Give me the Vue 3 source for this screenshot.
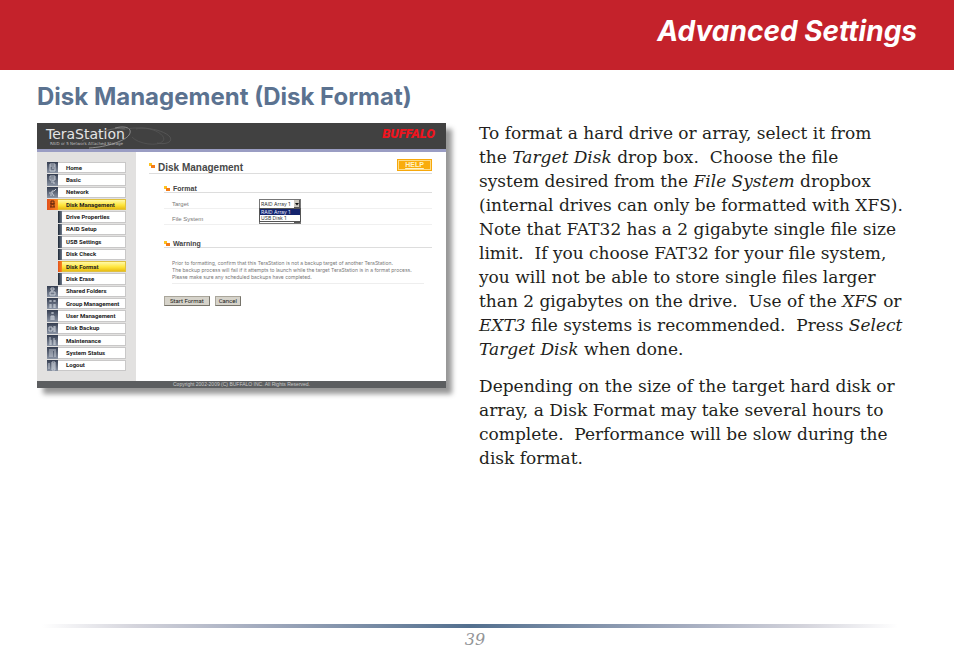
<script setup>
import { ref } from 'vue'

const menu = [
  { label: 'Home', icon: 'M3 2h5v7H3zM3 4h5M5 6h2' },
  { label: 'Basic', icon: 'M3 2h5v4H3zM4 4h4M6 6v3h2M4 8h1' },
  { label: 'Network', icon: 'M2 6h3V4h2l2-2M5 6l2 3M3 8h2' },
  { label: 'Disk Management', icon: 'M4 2h3v3H4zM3 5h5M3 8h5M4 6v2M7 6v2', active: true },
  { label: 'Drive Properties', sub: true },
  { label: 'RAID Setup', sub: true },
  { label: 'USB Settings', sub: true },
  { label: 'Disk Check', sub: true },
  { label: 'Disk Format', sub: true, active: true },
  { label: 'Disk Erase', sub: true },
  { label: 'Shared Folders', icon: 'M4 2h3v2H4zM3 6h5v3H3zM5 4v2' },
  { label: 'Group Management', icon: 'M3 2v2M4 2v2M7 2v2M8 2v2M3 6v4M4 6v4M7 6v4M8 6v4' },
  { label: 'User Management', icon: 'M5 2v2M6 2v2M4 6h3M4 6v4M5 6v4M6 6v4M7 6v4' },
  { label: 'Disk Backup', icon: 'M2 4h3v4H2zM7 3v6M8 3v6M5 6h2' },
  { label: 'Maintenance', icon: 'M3 2v8M4 5v5M7 3v7M8 5v5' },
  { label: 'System Status', icon: 'M2 3h7M3 4v6M5 4v6M8 4v6' },
  { label: 'Logout', icon: 'M5 2h3v8H5zM6 3v6M7 3v6M2 3v6' },
]
const target = ref('RAID Array 1')
const fileSystem = ref('XFS')

const first = [
  [{ t: 'To format a hard drive or array, select it from' }],
  [{ t: 'the ' }, { t: 'Target Disk', i: true }, { t: ' drop box.  Choose the file' }],
  [{ t: 'system desired from the ' }, { t: 'File System', i: true }, { t: ' dropbox' }],
  [{ t: '(internal drives can only be formatted with XFS).' }],
  [{ t: 'Note that FAT32 has a 2 gigabyte single file size' }],
  [{ t: 'limit.  If you choose FAT32 for your file system,' }],
  [{ t: 'you will not be able to store single files larger' }],
  [{ t: 'than 2 gigabytes on the drive.  Use of the ' }, { t: 'XFS', i: true }, { t: ' or' }],
  [{ t: 'EXT3', i: true }, { t: ' file systems is recommended.  Press ' }, { t: 'Select', i: true }],
  [{ t: 'Target Disk', i: true }, { t: ' when done.' }],
]
const second = [
  [{ t: 'Depending on the size of the target hard disk or' }],
  [{ t: 'array, a Disk Format may take several hours to' }],
  [{ t: 'complete.  Performance will be slow during the' }],
  [{ t: 'disk format.' }],
]
const paragraphs = [first, second]
</script>

<template>
  <div class="page">
    <header class="banner"><h1>Advanced Settings</h1></header>
    <main class="content">
      <h2>Disk Management (Disk Format)</h2>
      <div class="columns">
        <section class="shot" aria-label="TeraStation">
          <div class="top">
            <svg class="orbits" viewBox="0 0 150 26" aria-hidden="true">
              <g fill="none" stroke="#777" stroke-width=".7">
                <path d="M78 5c12-3 18 1 14 7S70 24 52 25" stroke="#aaa" />
                <path d="M45 18C58 9 82 3 88 6" />
                <path d="M76 10c18-9 50-5 57 4 3 5-4 8-13 6" stroke="#5d5d5d" />
                <path d="M99 6c13-4 32 6 27 12s-25 3-31-4" stroke="#585858" />
              </g>
            </svg>
            <div class="brand">
              <span class="name">TeraStation</span>
              <span class="tag">RAID or 5 Network Attached Storage</span>
            </div>
            <span class="buffalo">BUFFALO</span>
          </div>
          <div class="middle">
            <nav>
              <a v-for="m in menu" :key="m.label" href="#" :class="{ sub: m.sub, active: m.active }">
                <span class="icon">
                  <svg v-if="m.icon" viewBox="0 0 11 11" aria-hidden="true"><path :d="m.icon" /></svg>
                </span>
                <span class="label">{{ m.label }}</span>
              </a>
            </nav>
            <div class="panel">
              <div class="title">
                <svg class="mark" viewBox="0 0 6 6" aria-hidden="true"><path d="M0 0h3v3H0z" fill="#ffc31f" /><path d="M2 2h4v3H2z" fill="#f47b16" /></svg>
                <h3>Disk Management</h3>
                <button class="help" type="button">HELP</button>
              </div>
              <div class="inner">
                <h4>
                  <svg class="mark" viewBox="0 0 6 6" aria-hidden="true"><path d="M0 0h3v3H0z" fill="#ffc31f" /><path d="M2 2h4v3H2z" fill="#f47b16" /></svg>Format
                </h4>
                <div class="field">
                  <label for="target">Target</label>
                  <div class="drop">
                    <select id="target" v-model="target">
                      <option>RAID Array 1</option>
                      <option>USB Disk 1</option>
                    </select>
                    <svg class="arrow" viewBox="0 0 6 8" aria-hidden="true"><path d="M0 0h6v8H0z" fill="#cbc8bf" /><path d="M0 7.500h6M5.500 0v8" stroke="#555" /><path d="M1 3h4l-2 2.500z" fill="#111" /></svg>
                    <ul>
                      <li class="chosen">RAID Array 1</li>
                      <li>USB Disk 1</li>
                    </ul>
                  </div>
                </div>
                <div class="field">
                  <label for="filesystem">File System</label>
                  <div class="drop">
                    <select id="filesystem" v-model="fileSystem">
                      <option>XFS</option>
                      <option>EXT3</option>
                    </select>
                    <svg class="arrow" viewBox="0 0 6 8" aria-hidden="true"><path d="M0 0h6v8H0z" fill="#cbc8bf" /><path d="M0 7.500h6M5.500 0v8" stroke="#555" /></svg>
                  </div>
                </div>
                <h4 class="warning">
                  <svg class="mark" viewBox="0 0 6 6" aria-hidden="true"><path d="M0 0h3v3H0z" fill="#ffc31f" /><path d="M2 2h4v3H2z" fill="#f47b16" /></svg>Warning
                </h4>
                <p class="note">
                  Prior to formatting, confirm that this TeraStation is not a backup target of another TeraStation.<br>
                  The backup process will fail if it attempts to launch while the target TeraStation is in a format process.<br>
                  Please make sure any scheduled backups have completed.
                </p>
                <div class="actions">
                  <button type="button">Start Format</button>
                  <button type="button">Cancel</button>
                </div>
              </div>
            </div>
          </div>
          <div class="bottom">Copyright 2002-2009 (C) BUFFALO INC. All Rights Reserved.</div>
        </section>
        <article>
          <p v-for="(lines, n) in paragraphs" :key="n">
            <span v-for="(line, k) in lines" :key="k" class="line"><component :is="part.i ? 'em' : 'span'" v-for="(part, j) in line" :key="j">{{ part.t }}</component></span>
          </p>
        </article>
      </div>
    </main>
    <footer class="foot">
      <div class="rule"></div>
      <span>39</span>
    </footer>
  </div>
</template>

<style>
body { margin: 0; background: #fff; }
</style>

<style scoped>
* { box-sizing: border-box; }
h1, h2, h3, h4, p, ul { margin: 0; padding: 0; }
.page { min-height: 100vh; display: flex; flex-direction: column; }
.banner {
  height: 70px; padding: 12px 37px 0; background: #c4222b; text-align: right;
}
h1 { font: italic 700 28px/38px Inter, sans-serif; color: #fff; }
.content { flex: 1; padding: 8px 37px 0; }
h2 { font: 700 24px/38px Inter, sans-serif; color: #5b7290; white-space: nowrap; }
.columns {
  display: grid; grid-template-columns: minmax(0, 409fr) minmax(0, 438fr);
  gap: 33px; align-items: start; padding-top: 5px;
}

.shot {
  margin-top: 2px; display: flex; flex-direction: column; height: 265px;
  font-family: "Liberation Sans", sans-serif; background: #fff;
  box-shadow: 6px 6px 5px #989898;
}
.top {
  position: relative; display: flex; justify-content: space-between;
  height: 29px; padding: 4px 11px 0 9px; background: #414141;
  border-bottom: 3px solid #9a9dc3; color: #e4e4e4;
}
.orbits { position: absolute; left: 0; top: 0; width: 150px; height: 26px; }
.brand { position: relative; display: flex; flex-direction: column; }
.name { font: 14px/14px "DejaVu Sans", sans-serif; }
.tag { padding-left: 4px; font: 4px/6px "DejaVu Sans", sans-serif; color: #bbb; white-space: nowrap; }
.buffalo { font: italic 900 13px/14px Roboto, sans-serif; color: #f0141e; }
.middle { flex: 1; display: flex; min-height: 0; }
nav {
  flex: 0 0 99px; display: flex; flex-direction: column; gap: 1px;
  padding: 10px; background: #e2e1e0;
}
nav a {
  flex: 1; display: flex; min-height: 0; color: #222; text-decoration: none;
  font: 700 6px/8px Roboto, sans-serif;
}
.icon { flex: 0 0 11px; background: linear-gradient(#343d50, #8b94a4); }
.icon svg { display: block; width: 11px; height: 11px; fill: none; stroke: #dde2e9; stroke-width: 1; opacity: .8; }
.label {
  flex: 1; display: flex; align-items: center; padding-left: 8px;
  background: #fff; border: 1px solid #c9c8c8; border-left: 0; white-space: nowrap;
}
.sub { padding-left: 11px; }
.sub .icon { flex-basis: 4px; background: linear-gradient(90deg, #1e2836, #6f7b8c); }
.sub .label { padding-left: 4px; }
.active .label { background: linear-gradient(#fff9a8, #ffe63c 55%, #e9bd15); border-color: #dfc040; }
.active .icon { background: linear-gradient(90deg, #e2501c, #f98b20); }
.active .icon svg { stroke: #3d1508; }

.panel { flex: 1; min-width: 0; padding: 7px 14px 0 13px; color: #4a4a4a; }
.title { display: flex; align-items: center; height: 15px; border-bottom: 1px solid #ddd; }
.mark { width: 6px; height: 6px; margin-right: 3px; flex: none; }
h3 { flex: 1; padding-top: 3px; font-size: 10px; line-height: 12px; color: #484848; }
.help {
  width: 35px; height: 12px; margin-bottom: 2px; padding: 0; border: 1px solid #f6a80c; background: #f9ac0b;
  outline: 1px solid #ffdc86; outline-offset: -2px; color: #fff4c8;
  font: 700 7px/8px "Liberation Sans", sans-serif; text-decoration: underline;
}
.inner { padding-left: 15px; }
h4 {
  display: flex; align-items: center; height: 19px; padding-top: 11px;
  border-bottom: 1px solid #ddd; font-size: 7px; line-height: 8px; color: #444;
}
.field {
  display: flex; align-items: center; height: 16px; padding-left: 8px;
  border-bottom: 1px solid #f0f0f0; font-size: 6px; color: #777;
}
h4 + .field { padding-top: 6px; }
.field + .field { padding-top: 4px; }
.field label { width: 87px; }
.drop { position: relative; width: 42px; }
select {
  display: block; width: 42px; height: 10px; padding: 0 0 0 1px; border: 1px solid #777;
  border-radius: 0; appearance: none; background: #fff; color: #333;
  font: 5px/8px Inter, sans-serif;
}
.arrow { position: absolute; right: 1px; top: 1px; width: 6px; height: 8px; pointer-events: none; }
ul {
  position: absolute; left: 0; top: 9px; z-index: 1; width: 42px; list-style: none;
  border: 1px solid #555; background: #fff; font: 5px/6px Inter, sans-serif; color: #333;
}
li { padding-left: 1px; white-space: nowrap; }
.chosen { background: #14246e; color: #e5e9ff; }
.warning { height: 23px; padding-top: 15px; }
.note {
  margin: 0 8px; padding: 12px 0 2px; border-bottom: 1px solid #eee;
  font: 5px/7px Inter, sans-serif; color: #777; white-space: nowrap;
}
.actions { display: flex; gap: 5px; padding-top: 12px; }
.actions button {
  height: 10px; padding: 0 5px; border: 1px solid #aaa69b; border-right-color: #77746b; border-bottom-color: #77746b;
  background: #d6d3ca; color: #222; font: 6px/8px Roboto, sans-serif;
}
.actions button + button { padding: 0 3px; }
.bottom {
  height: 7px; background: #5c5e60; color: #c9c9c9; text-align: center;
  font-size: 5px; line-height: 7px;
}

article { font: 17px/24px "DejaVu Serif", serif; color: #231f20; }
article p + p { margin-top: 13px; }
.line { display: block; white-space: pre; }
.foot { display: flex; flex-direction: column; align-items: center; height: 37px; padding-right: 4px; }
.rule {
  align-self: stretch; height: 4px; margin: 0 52px 0 42px;
  background: linear-gradient(90deg, #fff, #d4d4dc 11%, #a4acbf 25%, #526f8e 50%, #a4acbf 75%, #d4d4dc 89%, #fff);
}
.foot span { font: italic 16px/24px "DejaVu Serif", serif; color: #939598; }
</style>
